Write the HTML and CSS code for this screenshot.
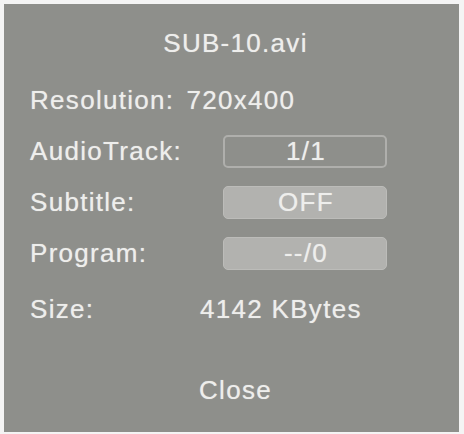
FILE: index.html
```html
<!DOCTYPE html>
<html>
<head>
<meta charset="utf-8">
<link rel="stylesheet" href="styles.css">
</head>
<body>
<div class="panel">
  <div class="title">SUB-10.avi</div>
  <div class="rows">
    <div class="row"><span class="label">Resolution:</span><span class="resval">720x400</span></div>
    <div class="row"><span class="label boxed">AudioTrack:</span><span class="box outline">1/1</span></div>
    <div class="row"><span class="label boxed">Subtitle:</span><span class="box filled">OFF</span></div>
    <div class="row"><span class="label boxed">Program:</span><span class="box filled">--/0</span></div>
  </div>
  <div class="row size"><span class="label sizelabel">Size:</span><span>4142 KBytes</span></div>
  <div class="close">Close</div>
</div>
</body>
</html>
```

FILE: styles.css
```css
html, body {
  margin: 0;
  padding: 0;
  background: #f4f4f4;
}
body {
  width: 464px;
  height: 434px;
  font-family: "Liberation Sans", Arial, sans-serif;
  font-size: 26px;
  letter-spacing: 1.3px;
  color: #eeeeec;
  text-shadow: 0 0 1px rgba(240, 240, 238, 0.6);
}
.panel {
  box-sizing: border-box;
  margin: 4px 5px 0 4px;
  width: 455px;
  height: 428px;
  background: #8e8f8b;
  padding: 14px 18px 0 26px;
  display: flex;
  flex-direction: column;
}
.title {
  height: 50px;
  line-height: 50px;
  text-align: center;
  margin-bottom: 7px;
}
.rows {
  display: flex;
  flex-direction: column;
}
.row {
  height: 51px;
  display: flex;
  align-items: center;
  white-space: pre;
}
.resval {
  margin-left: 12px;
}
.label.boxed {
  width: 193px;
  flex: none;
}
.sizelabel {
  width: 170px;
  flex: none;
}
.box {
  box-sizing: border-box;
  width: 164px;
  height: 33px;
  border-radius: 5px;
  display: flex;
  align-items: center;
  justify-content: center;
  padding-left: 2px;
}
.box.outline {
  border: 2px solid #afafac;
}
.box.filled {
  background: #b2b2af;
  border: 1px solid #bcbcb9;
}
.size {
  margin-top: 5px;
  height: 50px;
}
.close {
  margin-top: 31px;
  height: 50px;
  line-height: 50px;
  text-align: center;
}
```
